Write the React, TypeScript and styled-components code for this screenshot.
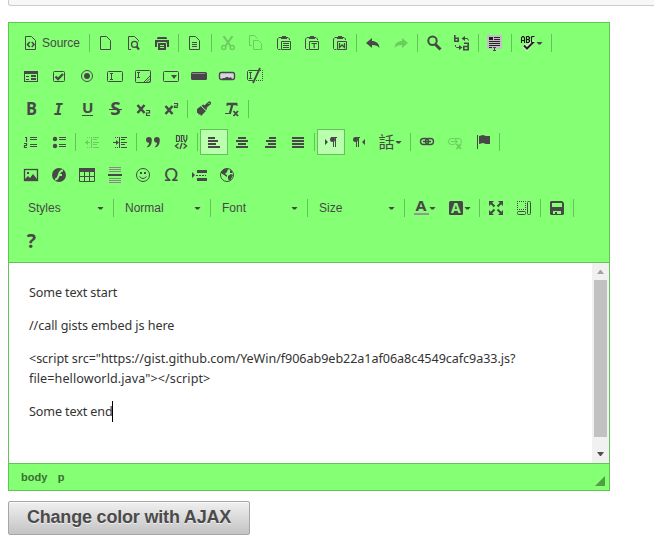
import React, { ReactNode } from 'react';
import styled, { createGlobalStyle } from 'styled-components';

const ink = '#484848';
const green = '#85ff74';
const line = '#62c456';
const faded = '#6ccc5f';

const GlobalStyle = createGlobalStyle`
  * { box-sizing: border-box; }
  html, body { height: 100%; }
  body { margin: 0; background: #fff; overflow: hidden; font-family: "Liberation Sans", Arial, sans-serif; }
`;

const Page = styled.main`
  display: flex;
  flex-direction: column;
  align-items: flex-start;
  padding-left: 8px;
`;

const PreviousPanel = styled.div`
  align-self: stretch;
  height: 6px;
  margin-bottom: 16px;
  background: #f7f7f7;
  border: 1px solid #cbcbcb;
  border-width: 0 0 1px 1px;
  border-bottom-left-radius: 3px;
`;

const Editor = styled.section`
  width: 602px;
  border: 1px solid ${line};
`;

const Toolbar = styled.div`
  display: flex;
  flex-direction: column;
  gap: 7px;
  height: 240px;
  padding: 7px 8px 8px;
  background: ${green};
  border-bottom: 1px solid ${line};
`;

const ToolRow = styled.div`
  display: flex;
  align-items: center;
  height: 26px;
  flex: none;
`;

const ToolButton = styled.button<{ $active?: boolean; $faded?: boolean }>`
  display: flex;
  align-items: center;
  height: 26px;
  margin: 0;
  padding: ${p => (p.$active ? '0 5px' : '0 6px')};
  border: ${p => (p.$active ? `1px solid ${line}` : '0')};
  background: ${p => (p.$active ? '#b9ffae' : 'transparent')};
  color: ${p => (p.$faded ? faded : ink)};
  font: 12px "Liberation Sans", Arial, sans-serif;
`;

const ButtonLabel = styled.span`
  width: 42px;
  padding-left: 3px;
  text-align: left;
`;

const Divider = styled.span`
  width: 1px;
  height: 18px;
  margin: 0 2px;
  background: ${line};
`;

const Glyph = styled.svg`
  display: block;
  width: 16px;
  height: 16px;
  flex: none;
  overflow: visible;
  fill: none;
  stroke: currentColor;
  stroke-width: 1;
  .s { fill: currentColor; stroke: none; }
  .g { fill: ${green}; stroke: none; }
  .l { stroke: ${green}; }
  text { fill: currentColor; stroke: none; }
  text.g { fill: ${green}; }
`;

const ArrowSlot = styled.svg`
  display: block;
  width: 7px;
  height: 4px;
  fill: ${ink};
`;

const Combo = styled.button<{ $first?: boolean }>`
  display: flex;
  align-items: center;
  justify-content: space-between;
  width: 92px;
  height: 26px;
  margin: 0 0 0 ${p => (p.$first ? 2 : 0)}px;
  padding: 0 7px 0 9px;
  border: 0;
  background: transparent;
  color: ${ink};
  font: 12px "Liberation Sans", Arial, sans-serif;
`;

const Content = styled.div`
  display: flex;
  height: 200px;
  background: #fff;
`;

const Document = styled.div`
  flex: 1;
  padding: 20px;
  color: #333;
  font: 12.6px/20px "Noto Sans", "Open Sans", sans-serif;
  p { margin: 0 0 13px; white-space: nowrap; }
`;

const TextLine = styled.span<{ $spacing?: number }>`
  display: block;
  letter-spacing: ${p => p.$spacing ?? 0}px;
`;

const Caret = styled.i`
  display: inline-block;
  width: 1px;
  height: 21px;
  margin: -1px 0 0 -0.5px;
  background: #000;
  vertical-align: top;
`;

const Scrollbar = styled.div`
  display: flex;
  flex-direction: column;
  align-items: center;
  width: 17px;
  background: #f1f1f1;
`;

const ScrollEnd = styled.svg<{ $dim?: boolean }>`
  display: block;
  width: 17px;
  height: 17px;
  fill: ${p => (p.$dim ? '#a3a3a3' : '#505050')};
`;

const Thumb = styled.div`
  width: 13px;
  height: 157px;
  margin-bottom: 9px;
  background: #c1c1c1;
`;

const Footer = styled.footer`
  display: flex;
  align-items: center;
  height: 27px;
  padding: 0 4px 0 12px;
  gap: 10.5px;
  border-top: 1px solid ${line};
  background: ${green};
  color: #3c6c36;
  font: bold 11px "Liberation Sans", Arial, sans-serif;
`;

const ResizeGrip = styled.svg`
  width: 10px;
  height: 10px;
  margin: 8px 0 0 auto;
  fill: #4f9f45;
`;

const ColorButton = styled.button`
  width: 242px;
  height: 34px;
  margin: 10px 0 0;
  padding: 0 0 2px;
  border: 1px solid #a6a6a6;
  border-radius: 2px;
  background: linear-gradient(#f0f0f0, #c3c3c3);
  box-shadow: inset 0 1px 0 #fafafa;
  color: #4b4b4b;
  font: bold 18px "Liberation Sans", Arial, sans-serif;
  letter-spacing: -0.19px;
  text-shadow: 0 1px 0 #eee;
  white-space: nowrap;
`;

const doc = <path d="M2.5 1.5h6l4 4v9h-10zM8.5 1.5v0" />;
const clip = (
  <>
    <path d="M5 2.5H3l-1.500 1.500v9.500l1 1h2M10 2.500h2l1.500 1.500v1" />
    <path className="s" d="M5 4V2h1V1h4v1h1v2z" />
    <path d="M5.500 6.500h9v8h-9z" />
  </>
);

const sans = '"Open Sans", sans-serif';

const drawings: Record<string, ReactNode> = {
  source: <>{doc}<path strokeWidth="1.600" d="M6.800 7L4.500 9.500 6.800 12M8.700 7L11 9.500 8.700 12" /></>,
  newPage: doc,
  preview: <><path d="M5 14.500H2.500v-13h6l4 4v1" /><circle cx="8.500" cy="9.300" r="3" strokeWidth="1.300" /><path strokeWidth="2" d="M10.500 11.500l2.500 3" /></>,
  print: <><path className="s" d="M4 2h8l1 1v1H3V3zM1 5h14v7h-2V8H3v4H1zM4 8h8v7H4z" /><path className="l" d="M3.500 7.500h9M3.500 8v4M12.500 8v4M6 10.500h4M6 12.500h4" /></>,
  template: <>{doc}<path d="M5 7.500h5M5 9.500h5M5 11.500h5" /></>,
  cut: <><path strokeWidth="2" d="M3.500 1l7 10M12.500 1l-7 10" /><circle cx="3.800" cy="12.500" r="2" strokeWidth="1.500" /><circle cx="12.200" cy="12.500" r="2" strokeWidth="1.500" /></>,
  copy: <path d="M4 10.500H1.500v-10h5l3 3M5.500 5.500h5l3 3v6h-8z" />,
  paste: <>{clip}<path d="M7 8.500h6M7 10.500h6M7 12.500h6" /></>,
  pasteText: <>{clip}<path strokeWidth="1.200" d="M7.500 8.500h5.500M10.200 8v5" /></>,
  pasteWord: <>{clip}<path strokeWidth="1.300" d="M7.500 8v4.500L10 10l2.500 2.500V8" /></>,
  undo: <path className="s" d="M1 8l6-5v3c4 0 7 2 7.500 7C13 11 11 10 7 10v3z" />,
  redo: <path className="s" d="M15 8L9 3v3c-4 0-7 2-7.500 7C3 11 5 10 9 10v3z" />,
  find: <><circle cx="6.500" cy="5.800" r="4.200" strokeWidth="2" /><path strokeWidth="3" d="M9.500 9.500l5 5" /></>,
  replace: <><path strokeWidth="1.600" d="M.8 0v6.300h3.400V3.200H.8M10 8.300h4.200v6.500h-4.400v-3.300h4.400" /><path d="M9 3.500h4.500l1 2M1.500 10v1.500l1 1H7" /><path className="s" d="M7.500 3.500L11 1v5zM8.500 12.500L5 10v5z" /></>,
  selectAll: <><path fill="#c5bcc5" stroke="none" d="M0 0h15v14H0z" /><path stroke="#222" d="M2 2.500h4M2 3.500h4M2 4.500h4M7 2.500h6M7 4.500h6M2 6.500h11M2 8.500h11M2 10.500h11M2 12.500h3" /><path d="M6 12.500h3M7.500 12v4M6 15.500h3" /></>,
  spell: <><path stroke="#d9f8d3" strokeWidth="4" d="M4 10.500l3 3 7-8" /><path stroke="#111" strokeWidth="1.100" d="M1.500 8V3l1-1.500h1L4.500 3v5M1.500 5.500h3M6.500 1.500v6h2l1-1V5.500L8.500 4.500h-2M6.500 1.500h2l1 1v1l-1 1M14.500 1.500H12l-.500 1v4l.500 1h2.500" /><path stroke="#222" strokeWidth="2" d="M4 10.500l3 3 6-6" /></>,
  form: <><path className="s" d="M1 3h14v11H1z" /><path className="g" d="M2 6h12v7H2z" /><path d="M3 8.500h3M3 11.500h3" /><path strokeWidth="2" d="M8 8h5M8 11h5" /></>,
  checkbox: <><rect x="2.500" y="3.500" width="11" height="10" rx="1" /><path strokeWidth="2.300" d="M4.500 8.500l2.500 2.500 5-5" /></>,
  radio: <><circle cx="8" cy="8" r="5.500" /><circle className="s" cx="8" cy="8" r="3" /></>,
  textField: <><rect x=".5" y="3.500" width="15" height="10" rx="1" /><path d="M3 5.500h3M4.500 5v7M3 11.500h3" /></>,
  textArea: <><rect x=".5" y="2.500" width="15" height="12" rx="1" /><path d="M2 4.500h3M3.500 4v6M2 9.500h3M9 14l6-6M11.500 14l3.500-3.500M14 14l1-1" /></>,
  select: <><rect x=".5" y="3.500" width="15" height="10" rx="1" /><path className="s" d="M8 7h6l-3 4z" /></>,
  button: <><rect x="0" y="4" width="16" height="8" rx="1.500" className="s" /><path stroke="#888" d="M1 5.500h13" /></>,
  imageButton: <><rect x=".5" y="4.500" width="15" height="7" rx="2" fill="#d9d4df" strokeWidth="1.400" /><path className="s" d="M3 11l1-1h2l1-1h2l1 1 2-1 1 2z" /></>,
  hidden: <><path d="M11 2.500H1.500L.5 3.500v8l1 1H6M2 4.500h3M3.500 4v7M2 10.500h3" /><path strokeDasharray="1 1" d="M13 2.500h2.500v10H8" /><path strokeWidth="1.800" d="M13 0L6 15" /></>,
  bold: <text x="3" y="14" fontSize="17" fontWeight="700" fontFamily={sans} textLength="11" lengthAdjust="spacingAndGlyphs">B</text>,
  italic: <text x="3" y="14" fontSize="16.500" fontWeight="700" fontStyle="italic" fontFamily='"DejaVu Sans Mono", monospace' textLength="9" lengthAdjust="spacingAndGlyphs">I</text>,
  underline: <><text x="3" y="12" fontSize="15" fontWeight="700" fontFamily={sans} textLength="11.500" lengthAdjust="spacingAndGlyphs">U</text><path d="M3 14.500h11" /></>,
  strike: <><text x="3.200" y="14" fontSize="17" fontWeight="700" fontFamily={sans} textLength="10.500" lengthAdjust="spacingAndGlyphs">S</text><path d="M2 8.500h13" /></>,
  subscript: <><path strokeWidth="2.500" d="M2.500 4l7 8M9.500 4l-7 8" /><path strokeWidth="1.200" d="M11 9.500h3.500v2.500h-3v2.500H15" /></>,
  superscript: <><path strokeWidth="2.500" d="M2.500 5l7 8M9.500 5l-7 8" /><path strokeWidth="1.200" d="M11 2.500h3.500V5h-3v1.500H15" /></>,
  brush: <><path className="s" d="M1 8l4-3 5 5-2 2-3 3-1-2-1 1-1-2H1z" /><path className="s" d="M5.500 4.500l2-1L11 7l-1 3z" /><path strokeWidth="3.200" strokeLinecap="round" d="M8.500 6.500L13.500 2" /><path className="l" d="M5.500 5.500l5 4.500M13 2v1" /></>,
  clearFormat: <><path strokeWidth="2.300" d="M3 3h10M8.500 3L6 12" /><path d="M3 2v3M13 2v3M1 12.500h6" /><path strokeWidth="1.800" d="M9.500 10l4.500 5M14 10l-4.500 5" /></>,
  numbered: <><path d="M2 3.500h1.500V8M7 3.500h7M7 5.500h7M7 10.500h7M7 12.500h7M1 9.500h2.500v2h-2v2H4" strokeWidth="1.200" /></>,
  bullets: <><circle className="s" cx="4" cy="5" r="2.200" /><circle className="s" cx="4" cy="12" r="2.200" /><path d="M8 3.500h7M8 5.500h7M8 10.500h7M8 12.500h7" /></>,
  outdent: <><path d="M9 3.500h6M9 5.500h4M9 8.500h6M9 10.500h4M9 13.500h6M1 8.500h5M7.500 3v11" /><path className="s" d="M1 8.500L4 6v5z" /><path strokeDasharray="1 1" d="M3 3.500h4M3 13.500h4" /></>,
  indent: <><path d="M9 3.500h6M9 5.500h4M9 8.500h6M9 10.500h4M9 13.500h6M1 8.500h4M7.500 3v11" /><path className="s" d="M7 8.500L4 6v5z" /><path strokeDasharray="1 1" d="M3 3.500h4M3 13.500h4" /></>,
  quote: <path className="s" d="M1 6a2.900 2.900 0 1 1 5.800 0c0 4-1.500 6.500-4.300 7.500L2 12.500c1.500-1 2-2 2-3.700C2 8.800 1 7.500 1 6zM9 6a2.900 2.900 0 1 1 5.800 0c0 4-1.500 6.500-4.300 7.500l-.5-1c1.500-1 2-2 2-3.700C10 8.800 9 7.500 9 6z" />,
  div: <><path strokeWidth="1.200" d="M3.500 1.500v6h2l1-1v-4l-1-1zM7.500 1.500h2.500M8.500 1v7M7.500 7.500h2.500M10.800 1v4l1.500 3 1.500-3V1" /><path strokeWidth="1.400" d="M5.500 9.500l-3 2.500 3 2.500M10.500 9.500l3 2.500-3 2.500M9 9l-2 6" /></>,
  left: <path strokeWidth="2" d="M2 4h7M2 7h10M2 10h8M2 13h12" />,
  center: <path strokeWidth="2" d="M4 4h8M2 7h12M4 10h8M2 13h12" />,
  right: <path strokeWidth="2" d="M7 4h7M4 7h10M6 10h8M3 13h11" />,
  justify: <path strokeWidth="2" d="M2 4h12M2 7h12M2 10h12M2 13h12" />,
  ltr: <><path className="s" d="M2 5v6l3-3zM8 3h6v1H8z" /><circle className="s" cx="9.500" cy="5.500" r="2.500" /><path d="M10.500 3v10M12.500 3v10" /></>,
  rtl: <><path className="s" d="M14 5v6l-3-3zM4 3h5v1H4z" /><circle className="s" cx="4.500" cy="5.500" r="2.500" /><path d="M5.500 3v10M7.500 3v10" /></>,
  language: <text x="-.5" y="14" fontSize="16" fontFamily='"Noto Sans CJK TC", sans-serif'>話</text>,
  link: <><rect x="1.500" y="4.500" width="8" height="6" rx="3" strokeWidth="1.400" /><rect x="6.500" y="4.500" width="8" height="6" rx="3" strokeWidth="1.400" /><path strokeWidth="1.500" d="M4 7.500h8" /></>,
  unlink: <><rect x="1.500" y="4.500" width="8" height="6" rx="3" /><path d="M8 4.500h4c2 0 3 3 2 5M4 7.500h7" /><path strokeWidth="1.700" d="M9.500 10l4.500 5M14 10l-4.500 5" /></>,
  anchor: <><path d="M2.500 1v14" /><path className="s" d="M4 2l4-1 3 1h4v8h-4L8 9l-4 1z" /></>,
  image: <><rect x="1.500" y="2.500" width="13" height="11" strokeWidth="1.300" /><path className="s" d="M2 13v-1l3-3 2 2 3-4 4 5v1zM4 5h2v2H4z" /></>,
  flash: <><circle className="s" cx="8" cy="8" r="7" /><path className="l" strokeWidth="2" d="M12 3.500C8.500 3.500 8.500 6 7.500 9S5.500 12.500 4 12.500M7 8h4" /></>,
  table: <><path className="s" d="M0 1h16v4H0z" /><path d="M.5 5v9.500h15V5M5.500 5v9M10.500 5v9M0 9.500h16" /></>,
  rule: <><path stroke="#858b83" d="M2 .5h12M2 2.500h12M2 4.500h12M2 11.500h12M2 13.500h12M2 15.500h12" /><path strokeWidth="2" d="M1 8h14" /></>,
  smiley: <><circle cx="8" cy="8" r="6.500" /><path className="s" d="M5 5h2v2H5zM9 5h2v2H9z" /><path d="M4.500 9.500q3.500 4 7 0" /></>,
  omega: <text x="1.300" y="14" fontSize="17" fontFamily='"DejaVu Sans", sans-serif' textLength="14" lengthAdjust="spacingAndGlyphs">Ω</text>,
  pageBreak: <><path className="s" d="M1 5l3 3-3 3zM6 3h10v3H6zM6 11h10v3H6z" /><path strokeDasharray="2 1" d="M5 8.500h10" /></>,
  globe: <><circle cx="8" cy="8" r="6.500" /><path className="s" d="M2 5l3-3 4 0-1 3-2 2 2 1v2l-3-2-3-2zM9 9l3-2 2 1-3 6-2-2zM11 3l2 1v2h-2z" /></>,
  textColor: <><text x="2.500" y="11" fontSize="14" fontWeight="700" fontFamily={sans} textLength="11" lengthAdjust="spacingAndGlyphs">A</text><path stroke="#969696" strokeWidth="2" d="M1 14h15" /></>,
  background: <><rect className="s" x="1" y="1" width="14" height="14" rx="1.500" /><text className="g" x="3" y="13" fontSize="14" fontWeight="700" fontFamily={sans}>A</text></>,
  maximize: <><path strokeWidth="2" d="M2 2l4.500 4.500M14 2L9.500 6.500M2 14l4.500-4.500M14 14L9.500 9.500" /><path className="s" d="M1 1h5L1 6zM15 1h-5l5 5zM1 15h5l-5-5zM15 15h-5l5-5z" /></>,
  blocks: <><path strokeDasharray="1 1" d="M1 1.500h8.500V10M1.500 1v9M1 9.500h9" /><rect x="11.500" y="1.500" width="3" height="13" rx="1" /><rect x="1.500" y="11.500" width="8" height="3" rx="1" /></>,
  save: <><path className="s" d="M2 1h11l2 2v11l-1 1H2l-1-1V2z" /><path className="g" d="M3 3h10v4H3zM4 11h8v3H4z" /><path className="s" d="M6 12h2v2H6z" /></>,
  help: <text x="3.800" y="15" fontSize="19.500" fontWeight="700" fontFamily={sans}>?</text>,
};

type Tool = '|' | string;
const fadedTools = ['cut', 'copy', 'redo', 'outdent', 'unlink'];
const activeTools = ['left', 'ltr'];
const menuTools = ['spell', 'language', 'textColor', 'background'];

function DownArrow() {
  return <ArrowSlot viewBox="0 0 7 4"><path d="M.500 1h6L4.500 3.500h-2z" /></ArrowSlot>;
}

function Tools({ items }: { items: Tool[] }) {
  return (
    <>
      {items.map((name, i) => name === '|' ? <Divider key={i} /> : (
        <ToolButton key={i} aria-label={name} $active={activeTools.includes(name)} $faded={fadedTools.includes(name)}>
          <Glyph viewBox="0 0 16 16">{drawings[name]}</Glyph>
          {name === 'source' && <ButtonLabel>Source</ButtonLabel>}
          {menuTools.includes(name) && <DownArrow />}
        </ToolButton>
      ))}
    </>
  );
}

const rows: Tool[][] = [
  ['source', '|', 'newPage', 'preview', 'print', '|', 'template', '|', 'cut', 'copy', 'paste', 'pasteText', 'pasteWord', '|', 'undo', 'redo', '|', 'find', 'replace', '|', 'selectAll', '|', 'spell', '|'],
  ['form', 'checkbox', 'radio', 'textField', 'textArea', 'select', 'button', 'imageButton', 'hidden'],
  ['bold', 'italic', 'underline', 'strike', 'subscript', 'superscript', '|', 'brush', 'clearFormat', '|'],
  ['numbered', 'bullets', '|', 'outdent', 'indent', '|', 'quote', 'div', '|', 'left', 'center', 'right', 'justify', '|', 'ltr', 'rtl', 'language', '|', 'link', 'unlink', 'anchor', '|'],
  ['image', 'flash', 'table', 'rule', 'smiley', 'omega', 'pageBreak', 'globe'],
];

export default function App() {
  return (
    <Page>
      <GlobalStyle />
      <PreviousPanel />
      <Editor>
        <Toolbar>
          {rows.map((items, i) => <ToolRow key={i}><Tools items={items} /></ToolRow>)}
          <ToolRow>
            {['Styles', 'Normal', 'Font', 'Size'].map((label, i) => (
              <React.Fragment key={label}>
                <Combo $first={i === 0}>{label}<DownArrow /></Combo>
                <Divider />
              </React.Fragment>
            ))}
            <Tools items={['textColor', 'background', '|', 'maximize', 'blocks', '|', 'save', '|']} />
          </ToolRow>
          <ToolRow><Tools items={['help']} /></ToolRow>
        </Toolbar>
        <Content>
          <Document>
            <p><TextLine $spacing={-0.12}>Some text start</TextLine></p>
            <p><TextLine $spacing={-0.08}>//call gists embed js here</TextLine></p>
            <p>
              <TextLine $spacing={-0.06}>{'<script src="https://gist.github.com/YeWin/f906ab9eb22a1af06a8c4549cafc9a33.js?'}</TextLine>
              <TextLine $spacing={0.08}>{'file=helloworld.java"></script>'}</TextLine>
            </p>
            <p><TextLine $spacing={-0.12}>Some text end<Caret /></TextLine></p>
          </Document>
          <Scrollbar>
            <ScrollEnd $dim viewBox="0 0 17 17"><path d="M5 11h7L9 7H8z" /></ScrollEnd>
            <Thumb />
            <ScrollEnd viewBox="0 0 17 17"><path d="M5 6h7l-3 4H8z" /></ScrollEnd>
          </Scrollbar>
        </Content>
        <Footer>
          <span>body</span><span>p</span>
          <ResizeGrip viewBox="0 0 10 10"><path d="M10 0v10H0z" /></ResizeGrip>
        </Footer>
      </Editor>
      <ColorButton>Change color with AJAX</ColorButton>
    </Page>
  );
}
